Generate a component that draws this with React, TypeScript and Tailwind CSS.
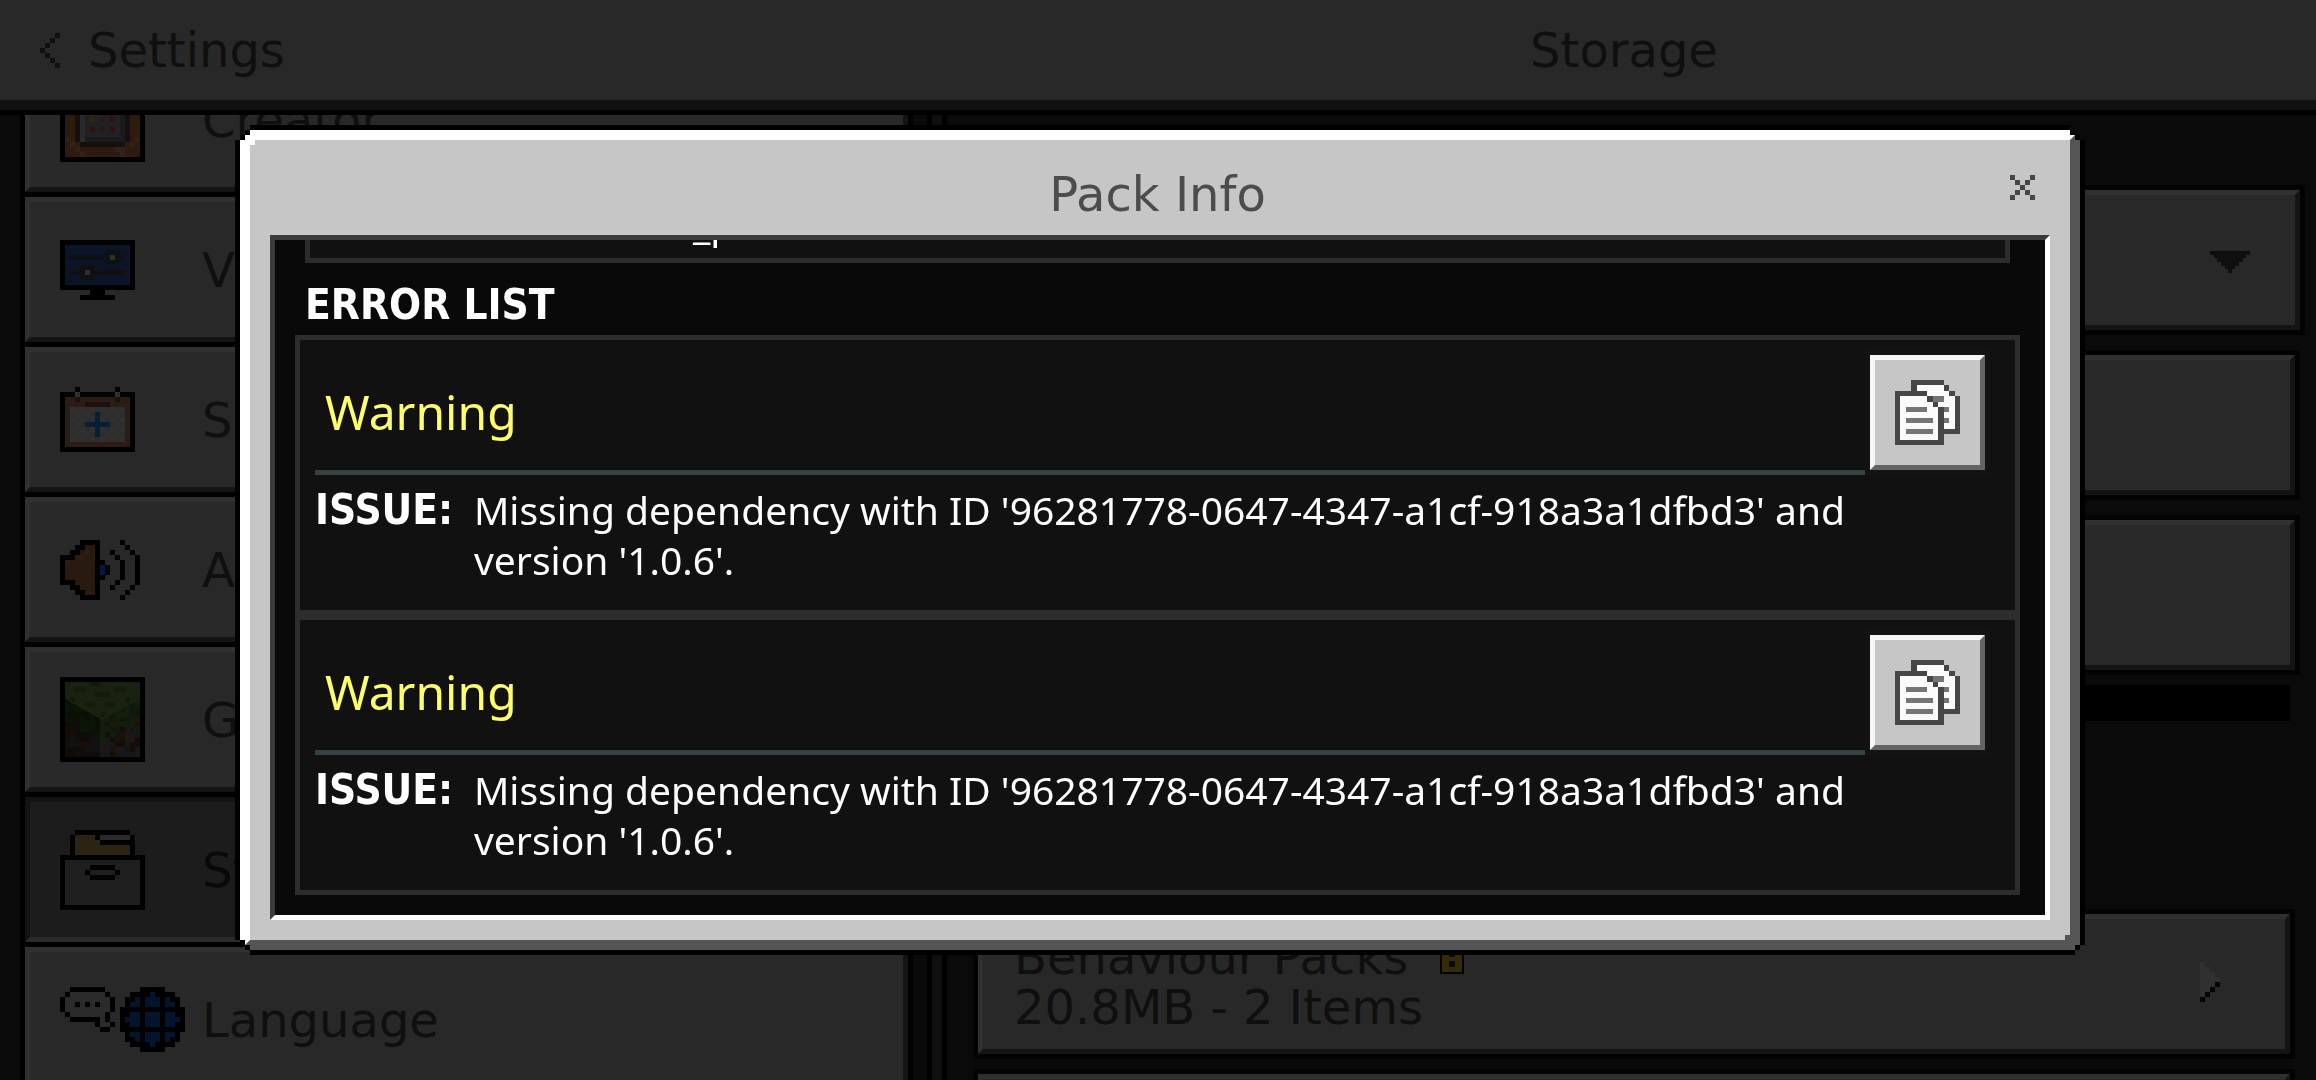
import type { ReactNode } from 'react';

const TITLE_FONT = "font-['DejaVu_Sans',sans-serif]";
const BODY_FONT = "font-['Noto_Sans',sans-serif]";
const HEADING_FONT = "font-['DejaVu_Sans_Condensed','DejaVu_Sans',sans-serif]";

interface PixelIconProps {
  rows: string[];
  palette: Record<string, string>;
}

// one character per pixel, each pixel is 5px wide on screen
function PixelIcon({ rows, palette }: PixelIconProps) {
  const cols = Math.max(...rows.map((r) => r.length));
  return (
    <svg
      width={cols * 5}
      height={rows.length * 5}
      viewBox={`0 0 ${cols} ${rows.length}`}
      shapeRendering="crispEdges"
      aria-hidden="true"
      className="shrink-0"
    >
      {rows.flatMap((row, y) =>
        row.split('').map((c, x) =>
          palette[c] ? <rect key={`${x}-${y}`} x={x} y={y} width={1} height={1} fill={palette[c]} /> : null,
        ),
      )}
    </svg>
  );
}

const creatorRows = [
  'KKKKKKKKKKKKKKKKK',
  'KBBBtBBBBBBtBBBBK',
  'KBBtBBBBBBBtBBBBK',
  'KttBDDDDDDDDDBttK',
  'KtBDLLLLLLLLSDBtK',
  'KBBDLGGGGGGGSDBBK',
  'KBBDLGyGrGrGSDBBK',
  'KBBDLGGGGGGGSDBBK',
  'KBBDLGyGpGrGSDBBK',
  'KBBDLGGGGGGGSDBBK',
  'KBBDLGrGpGrGSDBBK',
  'KBBDLGGGGGGGSDBBK',
  'KtBDLSSSSSSSSDBtK',
  'KBtBDDDDDDDDDBtBK',
  'KBBtBBBBBBBttBBBK',
  'KBBBtBBBBBBBtBBBK',
  'KKKKKKKKKKKKKKKKK',
];

const videoRows = [
  'KKKKKKKKKKKKKKK',
  'KNNNNNNNNNNNNNK',
  'KNNNNNNNNDDDNNK',
  'KNDDDDDDDDWDDNK',
  'KNNNNNNNNDDDNNK',
  'KNNNDDDNNNNNNNK',
  'KNDDDWDDDDDDDNK',
  'KNNNDDDNNNNNNNK',
  'KNNNNNNNNNNNNNK',
  'KKKKKKKKKKKKKKK',
  '......KKK......',
  '....KKKKKKK....',
];

const calendarRows = [
  '...K.......K...',
  'KKKWKKKKKKKWKKK',
  'KMMDMMMMMMMDMMK',
  'KMMMMDDDDDMMMMK',
  'KMPQPQPQPQPQPMK',
  'KMQPQPQUQPQPQMK',
  'KMPQPQPUPQPQPMK',
  'KMQPQUUUUUQPQMK',
  'KMPQPQPUPQPQPMK',
  'KMQPQPQUQPQPQMK',
  'KMPQPQPQPQPQPMK',
  'KMMMMMMMMMMMMMK',
  'KKKKKKKKKKKKKKK',
];

const audioRows = [
  '....KKKK....K...',
  '...KKbbK.....K..',
  '..KKbcbK..K...K.',
  'KKKbcbbK...K...K',
  'KcbbbbbKK...K..K',
  'KbbbbbbKUK..K..K',
  'KbbbbbbKUK..K..K',
  'KbbbbbbKK...K..K',
  'KKKbbbbK...K...K',
  '..KKbbbK..K...K.',
  '...KKbbK.....K..',
  '....KKKK....K...',
];

const storageRows = [
  '...KKKKKKKKKKK...',
  '..KYYYYKWWWWWWK..',
  '..KYYYYYKKKKKKK..',
  '..KYYYYYYYYYYYK..',
  '..KYYYYYYYYYYYK..',
  'KKKKKKKKKKKKKKKKK',
  'KGGGGGGGGGGGGGGGK',
  'KGGGGGKKKKKGGGGGK',
  'KGGGGKGGGGGKGGGGK',
  'KGGGGGKKKKKGGGGGK',
  'KGGGGGGGGGGGGGGGK',
  'KGGGGGGGGGGGGGGGK',
  'KGGGGGGGGGGGGGGGK',
  'KGGGGGGGGGGGGGGGK',
  'KGGGGGGGGGGGGGGGK',
  'KKKKKKKKKKKKKKKKK',
];

const languageRows = [
  '..KKKKKKK.......KKKKK....',
  '.KWWWWWWWK....KKKKUKKKK..',
  'KWWWWWWWWWK..KKUKUUUKUKK.',
  'KWWKWKWKWWK..KUUKUUUKUUK.',
  'KWWWWWWWWWK.KKKKKKKKKKKKK',
  '.KWWWWWWWK..KKUUKUUUKUUKK',
  '..KKKKKKWK..KUUUKUUUKUUUK',
  '.......KWWK.KKUUKUUUKUUKK',
  '........KK..KKKKKKKKKKKKK',
  '.............KUUKUUUKUUK.',
  '.............KKUKUUUKUKK.',
  '..............KKKKUKKKK..',
  '................KKKKK....',
];

const backRows = ['...K', '..K.', '.K..', 'K...', '.K..', '..K.', '...K'];
const closeRows = ['K...K', '.K.K.', '..K..', '.K.K.', 'K...K'];
const arrowRows = ['L...', 'LL..', 'LLL.', 'LLLL', 'LLLK', 'LLK.', 'LK..', 'K...'];

function GrassBlockIcon() {
  const browns = ['#1b120d', '#140e0b', '#20150f', '#17181a'];
  const darkBrowns = ['#120c09', '#0f0b0a', '#150e0a', '#101113'];
  const cells: ReactNode[] = [];
  for (let y = 4; y < 16; y++) {
    for (let x = 1; x < 16; x++) {
      const n = Math.floor(Math.abs(Math.sin(x * 12.9 + y * 78.2) * 43758)) % 4;
      const left = x < 8;
      const dirtFrom = 11 - Math.abs(x - 8) * 0.5 + (x % 3);
      let fill = n % 2 ? '#0f180a' : '#131d0b';
      if (left) fill = n % 2 ? '#0a1006' : '#0c1307';
      if (y > dirtFrom) fill = left ? darkBrowns[n] : browns[n];
      cells.push(<rect key={`${x}-${y}`} x={x} y={y} width={1} height={1} fill={fill} />);
    }
  }
  return (
    <svg width={85} height={85} viewBox="0 0 17 17" shapeRendering="crispEdges" aria-hidden="true">
      <rect width={17} height={17} fill="#000" />
      {cells}
      <path d="M1 1h15v3.4L8.5 8.6 1 4.4z" fill="#18220f" />
      <path
        d="M3 2h2v1H3zM7 3h3v1H7zM11 2h2v1h-2zM5 5h2v1H5zM9 5h2v1H9zM13 4h1v1h-1zM8 7h1v1H8zM6 1h2v1H6zM2 4h1v1H2z"
        fill="#131b0b"
      />
    </svg>
  );
}

function CopyIcon() {
  return (
    <svg width={65} height={65} viewBox="0 0 195 195" shapeRendering="crispEdges" aria-hidden="true">
      <path d="M48 0h99v15h15v18h18v15h15v114h-48v33H0V33h48z" fill="#464646" />
      <path d="M66 15h81v18h15v15h18v99h-33V81h-18V66h-15V48H96V33H66z" fill="#fafafa" />
      <path d="M15 48h81v18h18v15h15v99H15z" fill="#fafafa" />
      <path
        d="M114 48h33v18h-33zM147 81h15v15h-15zM147 114h15v15h-15zM33 81h63v15H33zM33 114h81v15H33zM33 147h81v15H33z"
        fill="#757575"
      />
    </svg>
  );
}

const menuItems = [
  {
    label: 'Creator',
    icon: (
      <PixelIcon
        rows={creatorRows}
        palette={{
          K: '#000', B: '#2e1a0e', t: '#30221b', D: '#14100d', L: '#2a2a2b',
          G: '#212123', S: '#1a1a1b', r: '#330f0f', p: '#2c1819', y: '#33230f',
        }}
      />
    ),
  },
  {
    label: 'Video',
    icon: <PixelIcon rows={videoRows} palette={{ K: '#000', N: '#0c142a', D: '#0f1012', W: '#2e2e2e' }} />,
  },
  {
    label: 'Subscriptions',
    icon: (
      <PixelIcon
        rows={calendarRows}
        palette={{ K: '#000', W: '#303030', M: '#2b1c15', D: '#1d110b', P: '#303030', Q: '#2d2d2e', U: '#071e36' }}
      />
    ),
  },
  {
    label: 'Audio',
    icon: <PixelIcon rows={audioRows} palette={{ K: '#000', b: '#281a0e', c: '#2c1e14', U: '#041a3a' }} />,
  },
  { label: 'Global Resources', icon: <GrassBlockIcon /> },
  {
    label: 'Storage',
    active: true,
    icon: <PixelIcon rows={storageRows} palette={{ K: '#000', Y: '#2b2413', W: '#2a2a2a', G: '#1f1f1f' }} />,
  },
  {
    label: 'Language',
    icon: <PixelIcon rows={languageRows} palette={{ K: '#000', W: '#2b2b2b', U: '#03152d' }} />,
  },
];

const errors = [
  {
    level: 'Warning',
    issue: "Missing dependency with ID '96281778-0647-4347-a1cf-918a3a1dfbd3' and version '1.0.6'.",
  },
  {
    level: 'Warning',
    issue: "Missing dependency with ID '96281778-0647-4347-a1cf-918a3a1dfbd3' and version '1.0.6'.",
  },
];

function Sidebar() {
  return (
    <nav className="flex overflow-hidden bg-[#0a0a0a] pl-5" aria-label="Settings">
      <div className="flex-1 border-x-5 border-black bg-black">
        <ul className="-mt-17 flex flex-col gap-[5px]">
          {menuItems.map((item) => (
            <li key={item.label}>
              <button
                className={`flex h-[145px] w-full items-center border-5 pl-[30px] text-left text-5xl whitespace-nowrap ${
                  item.active
                    ? 'border-t-[#131313] border-r-[#2b2b2b] border-b-[#2b2b2b] border-l-[#131313] bg-[#1c1c1c] text-[#090909]'
                    : 'border-t-[#303030] border-r-[#141414] border-b-[#141414] border-l-[#303030] bg-[#282828] text-[#0f0f0f]'
                }`}
              >
                <span className="w-[142px]">{item.icon}</span>
                {item.label}
              </button>
            </li>
          ))}
        </ul>
      </div>
      <div className="w-[19px] border-r-5 border-black" />
    </nav>
  );
}

const bevel =
  'w-full border-5 border-t-[#303030] border-r-[#141414] border-b-[#141414] border-l-[#303030] bg-[#282828] text-[#0f0f0f]';

function StoragePane() {
  return (
    <div className="flex overflow-hidden bg-[#0a0a0a]">
      <div className="w-[15px] border-r-5 border-black bg-[#0f0f0f]" />
      <div className="flex flex-1 flex-col pt-[70px] pr-[11px] pl-[26px]">
        <div className="relative flex h-[150px] shrink-0 border-5 border-[#030303]">
          <select aria-label="Sort by" className={`${bevel} appearance-none px-10 text-5xl`}>
            <option>Size</option>
          </select>
          <svg
            width={40}
            height={22}
            viewBox="0 0 120 66"
            shapeRendering="crispEdges"
            aria-hidden="true"
            className="pointer-events-none absolute top-[61px] right-[50px]"
          >
            <path
              d="M0 0h120v12h-12v10h-9v11H87v11H75v10h-9v12H54V54h-9V44H33V33H21V22h-9V12H0z"
              fill="#0f0f0f"
            />
          </svg>
        </div>
        <div className="mt-[15px] mr-[5px] flex h-[150px] shrink-0 border-5 border-[#030303]">
          <button aria-label="Select all" className={bevel} />
        </div>
        <div className="mt-[15px] mr-[5px] flex h-[160px] shrink-0 border-5 border-[#030303]">
          <button aria-label="Delete cached data" className={bevel} />
        </div>
        <div className="mt-[10px] mr-[15px] h-9 shrink-0 bg-black" />
        <div className="mt-[188px] mr-[10px] flex h-[150px] shrink-0 border-5 border-[#030303]">
          <button className={`${bevel} flex items-center justify-between pr-[65px] pb-1 pl-[31px] text-left`}>
            <span className="text-5xl leading-[50px]">
              <span className="flex items-end gap-8">
                Behaviour Packs
                <svg width={24} height={35} viewBox="0 0 24 35" aria-hidden="true" className="mb-2">
                  <path d="M0 0h24v35H0z" fill="#000" />
                  <path d="M2 2h20v31H2z" fill="#362b07" />
                  <path d="M9 7h6v11H9zM9 22h6v6H9z" fill="#0a0a0a" />
                </svg>
              </span>
              20.8MB - 2 Items
            </span>
            <PixelIcon rows={arrowRows} palette={{ L: '#303030', K: '#050505' }} />
          </button>
        </div>
        <div className="mt-[10px] mr-[10px] flex h-[150px] shrink-0 border-5 border-[#030303]">
          <button aria-label="World templates" className={bevel} />
        </div>
      </div>
    </div>
  );
}

function ErrorCard({ level, issue }: { level: string; issue: string }) {
  return (
    <article className="min-h-[280px] border-5 border-[#2d2d2d] bg-[#111111] pt-[10px] pr-[25px] pl-[15px]">
      <div className="flex">
        <div className="flex flex-1 items-center border-b-5 border-[#364241] pt-1 pl-[10px] text-5xl text-[#ffff6b]">
          {level}
        </div>
        <div className="border-5 border-[#131313]">
          <button
            aria-label="Copy"
            className="flex size-[115px] items-center justify-center border-5 border-t-[#f7f7f7] border-r-[#646464] border-b-[#646464] border-l-[#f7f7f7] bg-[#c6c6c6]"
          >
            <CopyIcon />
          </button>
        </div>
      </div>
      <div className="flex pt-[10px] pr-[125px]">
        <h3 className={`${HEADING_FONT} w-[159px] shrink-0 text-[42px] leading-[50px] font-bold text-white`}>
          ISSUE:
        </h3>
        <p className="flex-1 text-[39px] leading-[50px] text-white">{issue}</p>
      </div>
    </article>
  );
}

function PackInfoDialog() {
  return (
    <div className="fixed inset-0 flex py-[125px] pr-[231px] pl-[235px]">
      <div
        role="dialog"
        aria-modal="true"
        aria-labelledby="dialog-title"
        className="flex flex-1 bg-black p-[5px] [clip-path:polygon(0_15px,5px_15px,5px_10px,10px_10px,10px_5px,15px_5px,15px_0,calc(100%_-_15px)_0,calc(100%_-_15px)_5px,calc(100%_-_10px)_5px,calc(100%_-_10px)_10px,calc(100%_-_5px)_10px,calc(100%_-_5px)_15px,100%_15px,100%_calc(100%_-_10px),calc(100%_-_5px)_calc(100%_-_10px),calc(100%_-_5px)_calc(100%_-_5px),calc(100%_-_10px)_calc(100%_-_5px),calc(100%_-_10px)_100%,15px_100%,15px_calc(100%_-_5px),10px_calc(100%_-_5px),10px_calc(100%_-_10px),5px_calc(100%_-_10px),5px_calc(100%_-_15px),0_calc(100%_-_15px))]"
      >
        <div className="relative flex flex-1 flex-col border-10 border-t-white border-r-[#555555] border-b-[#555555] border-l-white bg-[#c6c6c6] px-5 pb-5 [clip-path:polygon(0_10px,5px_10px,5px_5px,10px_5px,10px_0,calc(100%_-_10px)_0,calc(100%_-_10px)_5px,calc(100%_-_5px)_5px,calc(100%_-_5px)_10px,100%_10px,100%_calc(100%_-_5px),calc(100%_-_5px)_calc(100%_-_5px),calc(100%_-_5px)_100%,10px_100%,10px_calc(100%_-_5px),5px_calc(100%_-_5px),5px_calc(100%_-_10px),0_calc(100%_-_10px))]">
          <span className="absolute top-0 left-0 size-[5px] bg-white" />
          <span className="absolute right-0 bottom-0 size-[5px] bg-[#555555]" />
          <header className="relative flex h-[95px] shrink-0 items-center justify-center pr-[5px]">
            <h1 id="dialog-title" className="pt-3 text-5xl text-[#4c4c4c]">
              Pack Info
            </h1>
            <button aria-label="Close" className="absolute right-[15px]">
              <PixelIcon rows={closeRows} palette={{ K: '#464646' }} />
            </button>
          </header>
          <div className="flex flex-1 flex-col overflow-hidden border-5 border-t-[#3b3b3b] border-r-white border-b-white border-l-[#3b3b3b] bg-[#090909]">
            <section className={`${BODY_FONT} flex flex-1 flex-col justify-end overflow-hidden pr-[25px] pb-5 pl-5`}>
              <div className="mx-[10px] shrink-0 border-5 border-[#2d2d2d] bg-[#111111] pb-[9px] pl-[383px] text-[39px] leading-[50px] text-white">
                _p
              </div>
              <h2
                className={`${HEADING_FONT} shrink-0 pt-[17px] pb-[5px] pl-[10px] text-[42px] leading-[50px] font-bold text-white`}
              >
                ERROR LIST
              </h2>
              {errors.map((error, index) => (
                <ErrorCard key={index} level={error.level} issue={error.issue} />
              ))}
            </section>
          </div>
        </div>
      </div>
    </div>
  );
}

export default function App() {
  return (
    <div className={`${TITLE_FONT} flex h-screen flex-col overflow-hidden bg-[#0a0a0a]`}>
      <header className="border-b-5 border-black">
        <div className="grid h-[110px] grid-cols-[233fr_346fr] items-center border-b-10 border-[#111111] bg-[#282828] text-5xl text-[#0f0f0f]">
          <button className="flex items-center gap-7 pl-10">
            <PixelIcon rows={backRows} palette={{ K: '#0f0f0f' }} />
            Settings
          </button>
          <h1 className="text-center">Storage</h1>
        </div>
      </header>
      <main className="grid min-h-0 flex-1 grid-cols-[233fr_346fr]">
        <Sidebar />
        <StoragePane />
      </main>
      <PackInfoDialog />
    </div>
  );
}
